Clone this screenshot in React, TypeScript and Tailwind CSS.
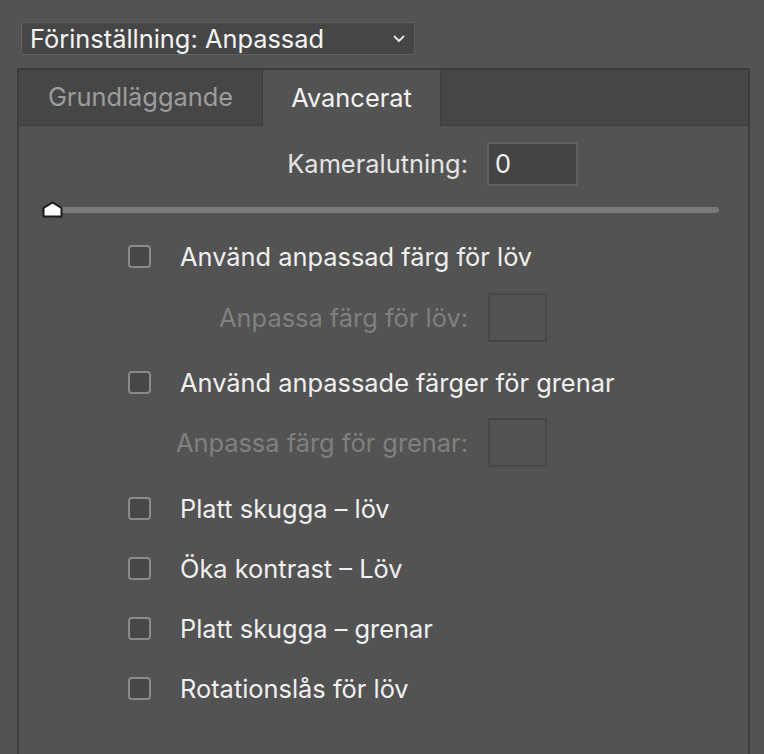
import React from "react";

type CheckRowProps = { label: string; className?: string };

function CheckRow({ label, className = "" }: CheckRowProps) {
  return (
    <label className={`flex items-center h-[23px] ${className}`}>
      <span className="ml-[109px] w-[23px] h-[23px] shrink-0 rounded-[4px] border-2 border-[#8a8a8a] bg-[#474747]" />
      <span className="ml-[29px] text-[#f0f0f0] whitespace-nowrap leading-none">
        {label}
      </span>
    </label>
  );
}

function SwatchRow({ label, className = "" }: CheckRowProps) {
  return (
    <div className={`flex items-center h-[49px] ${className}`}>
      <span className="w-[449px] text-right text-[#808080] whitespace-nowrap leading-none">
        {label}
      </span>
      <span className="ml-[20px] w-[59px] h-[49px] border-2 border-[#474747]" />
    </div>
  );
}

export default function App() {
  return (
    <div className="min-h-screen bg-[#535353] pt-[22px] font-['Inter',sans-serif] text-[25.4px] overflow-hidden">
      {/* preset dropdown */}
      <div className="ml-[21px] w-[394px] h-[33px] flex items-center justify-between pl-[8px] pr-[9px] bg-[#464646] border border-[#5f5f5f] rounded-[2px]">
        <span className="text-[#f5f5f5] leading-none">Förinställning: Anpassad</span>
        <svg width="12" height="8" viewBox="0 0 12 8" fill="none">
          <polyline
            points="1.5,1.5 6,6 10.5,1.5"
            stroke="#e6e6e6"
            strokeWidth="1.8"
            strokeLinecap="round"
            strokeLinejoin="round"
          />
        </svg>
      </div>

      {/* panel */}
      <div className="mt-[13px] ml-[17px] w-[733px] h-[700px] border-2 border-b-0 border-[#3c3c3c]">
        <div className="flex h-[56px] bg-[#464646]">
          <div className="w-[244px] flex items-center justify-center text-[#9d9d9d] border-r border-b border-[#3e3e3e]">
            Grundläggande
          </div>
          <div className="w-[177px] flex items-center justify-center bg-[#535353] text-[#f2f2f2]">
            Avancerat
          </div>
          <div className="flex-1 border-b border-l border-[#3e3e3e]" />
        </div>

        {/* camera tilt */}
        <div className="mt-[16px] flex items-center h-[44px]">
          <span className="w-[449px] text-right text-[#e4e4e4] leading-none">
            Kameralutning:
          </span>
          <div className="ml-[19px] w-[91px] h-[44px] flex items-center pl-[6px] bg-[#454545] border-2 border-[#606060] text-[#f2f2f2] leading-none">
            0
          </div>
        </div>

        {/* slider */}
        <div className="mt-[15px] relative h-[17px]">
          <div className="absolute left-[26px] top-[6px] w-[674px] h-[6px] rounded-full bg-[#7a7a7a]" />
          <svg
            className="absolute left-[23px] top-0"
            width="21"
            height="17"
            viewBox="0 0 21 17"
          >
            <path
              d="M10.5 1.5 L19.5 7 L19.5 15.5 L1.5 15.5 L1.5 7 Z"
              fill="#ffffff"
              stroke="#1a1a1a"
              strokeWidth="2"
              strokeLinejoin="round"
            />
          </svg>
        </div>

        <CheckRow label="Använd anpassad färg för löv" className="mt-[27px]" />
        <SwatchRow label="Anpassa färg för löv:" className="mt-[25px]" />
        <CheckRow label="Använd anpassade färger för grenar" className="mt-[29px]" />
        <SwatchRow label="Anpassa färg för grenar:" className="mt-[24px]" />

        <div className="mt-[30px] flex flex-col gap-[37px]">
          <CheckRow label="Platt skugga – löv" />
          <CheckRow label="Öka kontrast – Löv" />
          <CheckRow label="Platt skugga – grenar" />
          <CheckRow label="Rotationslås för löv" />
        </div>
      </div>
    </div>
  );
}
